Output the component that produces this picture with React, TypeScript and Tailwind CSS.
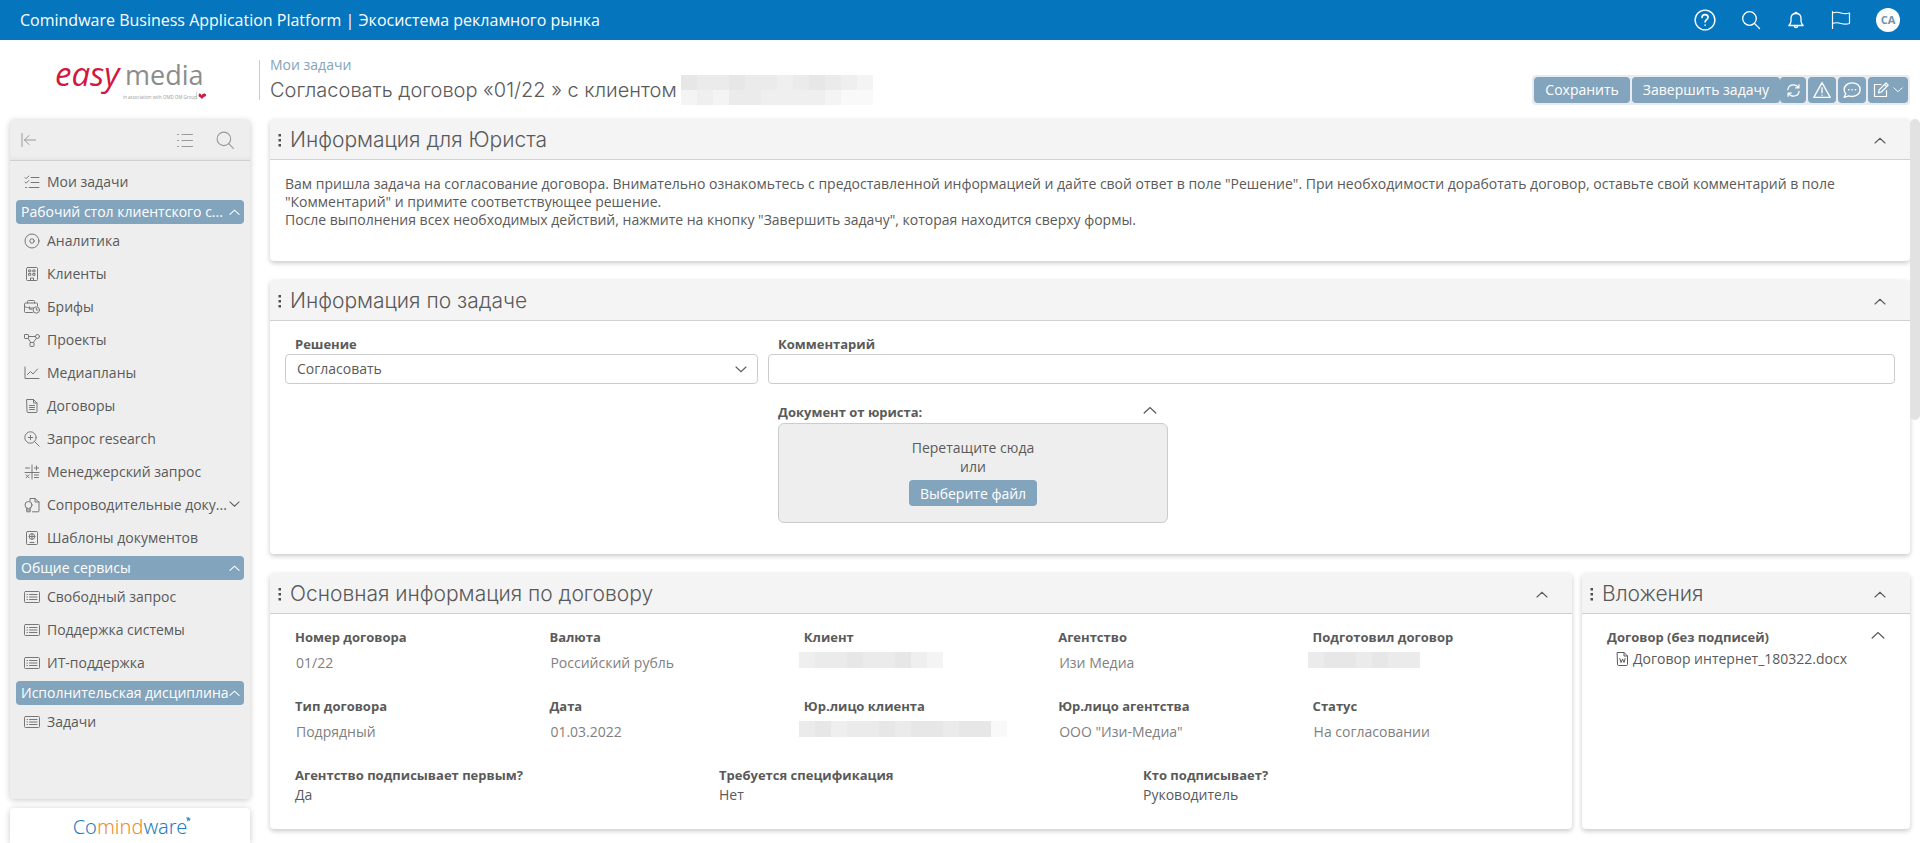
import type { ReactNode } from "react";

function Icon({ children, className = "size-4", box = 16 }: { children: ReactNode; className?: string; box?: number }) {
  return (
    <svg
      viewBox={`0 0 ${box} ${box}`}
      className={`shrink-0 ${className}`}
      fill="none"
      stroke="currentColor"
      strokeWidth={1}
      strokeLinecap="round"
      strokeLinejoin="round"
      aria-hidden="true"
    >
      {children}
    </svg>
  );
}

const icons = {
  checklist: (
    <>
      <path d="M1 3.500l1.200 1.200L4.800 2M1 8l1.200 1.200L4.800 6.500M7 3.500h8M7 8.500h8M5 13.500h10" />
      <path d="M1.500 13.500h1" />
    </>
  ),
  target: (
    <>
      <circle cx="8" cy="8" r="7" />
      <circle cx="8" cy="8" r="2.200" />
    </>
  ),
  building: (
    <>
      <rect x="2.500" y="1.500" width="11" height="13" rx="1" />
      <rect x="5" y="4" width="1.800" height="1.800" />
      <rect x="9.200" y="4" width="1.800" height="1.800" />
      <rect x="5" y="7.500" width="1.800" height="1.800" />
      <rect x="9.200" y="7.500" width="1.800" height="1.800" />
      <path d="M6.500 14.500v-2.500h3v2.500" />
    </>
  ),
  briefcase: (
    <>
      <path d="M8.500 13.500H1.500a1 1 0 0 1-1-1V5a1 1 0 0 1 1-1h11a1 1 0 0 1 1 1v2M3.500 4V2.500a1 1 0 0 1 1-1h5a1 1 0 0 1 1 1V4M.5 7.500c2 1 4 1.500 6 1.500h3M5.500 7.800v2.400h2.500" />
      <circle cx="12.300" cy="11" r="3.200" />
      <path d="M12.300 9.300V11h1.400" />
    </>
  ),
  nodes: (
    <>
      <rect x=".5" y="2.500" width="4" height="4" rx=".6" />
      <circle cx="13.500" cy="4.500" r="2" />
      <rect x="6" y="10.500" width="4" height="4" rx=".6" />
      <path d="M4.500 4.500h7M4 6.500l2.800 4M12.500 6.300l-3.300 4.200" />
    </>
  ),
  chart: <path d="M1 2v11.500h14M3.500 9.500l3-3 2.500 2.500 4.500-5" />,
  doc: (
    <>
      <path d="M3 1.500h6.500l3.500 3.500v8.500a1 1 0 0 1-1 1H4a1 1 0 0 1-1-1zM9.500 1.500V5H13M5.500 7.500h5M5.500 9.500h5M5.500 11.500h5" />
    </>
  ),
  zoom: (
    <>
      <circle cx="6.500" cy="6.500" r="5.700" />
      <path d="M10.700 10.700l4.500 4.500M6.500 4.300v4.400M4.300 6.500h4.400" />
    </>
  ),
  calc: <path d="M1 8.500h14M8 1v14M1.500 4h4M10.500 4h4M12.500 2v4M2 10.800l3 3M5 10.800l-3 3M10.500 11h4M10.500 13.500h4" />,
  docs: (
    <>
      <path d="M6 4V1.500h5l4 3.500v9a.8.8 0 0 1-.8.8H8.500M11 1.500V5h4" />
      <circle cx="4.500" cy="8" r="3.500" />
      <path d="M2.800 11.200v3.600h3.400v-3.600M2.800 13h3.400" />
    </>
  ),
  template: (
    <>
      <rect x="2.500" y="1.500" width="11" height="13" rx="1" />
      <circle cx="8" cy="6.500" r="2.800" />
      <path d="M5.200 6.500h5.600M8 3.700v5.600M6 12.500h4" />
    </>
  ),
  form: (
    <>
      <rect x=".5" y="2.500" width="15" height="11" rx="1" />
      <path d="M3 5.500h.5M5.500 5.500h7.500M3 8h.5M5.500 8h7.500M3 10.500h.5M5.500 10.500h7.500" />
    </>
  ),
};

type IconName = keyof typeof icons;

function Chevron({ up = false, className = "w-3" }: { up?: boolean; className?: string }) {
  return (
    <svg viewBox="0 0 12 7" className={`shrink-0 ${className}`} fill="none" stroke="currentColor" strokeWidth={1.1} strokeLinecap="round" aria-hidden="true">
      <path d={up ? "M1 6l5-4.700L11 6" : "M1 1l5 4.700L11 1"} />
    </svg>
  );
}

type Item = { icon: IconName; label: string; expandable?: boolean };

const workspace: Item[] = [
  { icon: "target", label: "Аналитика" },
  { icon: "building", label: "Клиенты" },
  { icon: "briefcase", label: "Брифы" },
  { icon: "nodes", label: "Проекты" },
  { icon: "chart", label: "Медиапланы" },
  { icon: "doc", label: "Договоры" },
  { icon: "zoom", label: "Запрос research" },
  { icon: "calc", label: "Менеджерский запрос" },
  { icon: "docs", label: "Сопроводительные доку...", expandable: true },
  { icon: "template", label: "Шаблоны документов" },
];

const services: Item[] = [
  { icon: "form", label: "Свободный запрос" },
  { icon: "form", label: "Поддержка системы" },
  { icon: "form", label: "ИТ-поддержка" },
];

function NavItem({ icon, label, expandable }: Item) {
  return (
    <li>
      <a href="#" className="flex h-[33px] items-center pl-2 pr-1">
        <Icon className="mr-[7px] size-4 text-[#777]">{icons[icon]}</Icon>
        <span className="grow whitespace-nowrap">{label}</span>
        {expandable && <Chevron className="w-[11px]" />}
      </a>
    </li>
  );
}

function NavSection({ title, items }: { title: string; items: Item[] }) {
  return (
    <li>
      <button type="button" className="mt-0.5 flex h-6 w-full items-center justify-between rounded bg-[#83a4bd] pl-[5px] pr-1 font-medium text-white">
        <span className="whitespace-nowrap">{title}</span>
        <Chevron up className="w-[11px]" />
      </button>
      <ul>
        {items.map((item) => (
          <NavItem key={item.label} {...item} />
        ))}
      </ul>
    </li>
  );
}

function Sidebar() {
  return (
    <aside className="flex w-[260px] shrink-0 flex-col">
      <div className="flex h-20 items-center justify-end">
        <EasyMediaLogo />
        <div className="ml-[50px] h-10 w-px bg-[#ccc]" />
      </div>
      <nav className="mx-[10px] grow rounded bg-[#eee] shadow-[0_1px_6px_rgba(0,0,0,0.22)]">
        <div className="flex h-[41px] items-center border-b border-[#d0d0d0] pl-[11px] pr-[7px] text-[#999] shadow-[0_-3px_5px_-3px_rgba(0,0,0,0.08)_inset]">
          <button type="button" aria-label="Свернуть меню" className="mr-auto">
            <Icon className="size-4">
              <path d="M1 1.500v13M14.500 8h-11M8 3.500L3.500 8 8 12.500" />
            </Icon>
          </button>
          <button type="button" aria-label="Список" className="mr-[23px]">
            <Icon className="size-4">
              <path d="M5 2.500h10.500M5 8.500h10.500M5 14.500h10.500M.5 2.500h1M.5 8.500h1M.5 14.500h1" />
            </Icon>
          </button>
          <button type="button" aria-label="Поиск по меню" className="mr-[9px]">
            <Icon className="size-[18px]">
              <circle cx="7" cy="7" r="6" />
              <path d="M11.300 11.300l4.200 4.200" />
            </Icon>
          </button>
        </div>
        <ul className="px-1.5 pt-1">
          <NavItem icon="checklist" label="Мои задачи" />
          <NavSection title="Рабочий стол клиентского с..." items={workspace} />
          <NavSection title="Общие сервисы" items={services} />
          <NavSection title="Исполнительская дисциплина" items={[{ icon: "form", label: "Задачи" }]} />
        </ul>
      </nav>
      <footer className="mx-[10px] mt-[9px] flex h-[35px] items-end justify-center rounded-t bg-white pb-0.5 shadow-[0_1px_6px_rgba(0,0,0,0.22)]">
        <span className='relative font-["Noto_Sans","Open_Sans",sans-serif] text-[20px] font-light leading-7 text-[#1f7fc4]'>
          Co<span className="text-[#f08a30]">mind</span>ware
          <svg viewBox="0 0 6 6" className="absolute -right-1 top-1 size-[5px]" fill="#3a8fc9" aria-hidden="true">
            <path d="M0 0l2.500 1L3.500 0l.5 1.500L6 2 4.500 3.200 5 5 3 4l-1.500 2L1.500 3z" />
          </svg>
        </span>
      </footer>
    </aside>
  );
}

function EasyMediaLogo() {
  return (
    <svg viewBox="0 0 156 64" className="w-[156px]" role="img" aria-label="easymedia">
      <text x="2" y="38" fontFamily="Open Sans" fontStyle="italic" fontSize="33" fill="#d3173f">
        easy
      </text>
      <text x="72" y="37" fontFamily="Open Sans" fontSize="27" fill="#8c8c8c">
        media
      </text>
      <text x="70" y="51" fontFamily="Open Sans" fontSize="4.500" fill="#999">
        in association with OMD OM Group
      </text>
      <path d="M143.500 44v7" stroke="#bbb" strokeWidth=".7" />
      <path d="M146 46c1-1 2 0 2.500 1.500 1-1.500 2.500-2.500 4-1.500 1.500 1.200 0 3-1.500 2.700l-2 2.300-2-2c-1 .5-2-1.500-1-3z" fill="#d3173f" />
    </svg>
  );
}

function TopBar() {
  return (
    <header className="flex h-10 shrink-0 items-center gap-[25px] bg-[#0575be] px-5 text-white">
      <h1 className="mr-auto text-base">Comindware Business Application Platform | Экосистема рекламного рынка</h1>
      <button type="button" aria-label="Справка">
        <Icon className="size-[22px]" box={20}>
          <circle cx="10" cy="10" r="9" strokeWidth={1.300} />
          <path d="M7.300 7.800c0-1.700 1.200-2.700 2.700-2.700s2.800 1 2.800 2.500c0 2-2.700 2-2.700 4.200M10.100 14.600v.2" strokeWidth={1.500} />
        </Icon>
      </button>
      <button type="button" aria-label="Поиск">
        <Icon className="size-5" box={20}>
          <circle cx="8.500" cy="8.500" r="6.800" strokeWidth={1.300} />
          <path d="M13.500 13.500l5 5" strokeWidth={1.300} />
        </Icon>
      </button>
      <button type="button" aria-label="Уведомления">
        <Icon className="size-5" box={20}>
          <path d="M2.800 15.500h14.400c-1.500-1.200-2.200-2.500-2.200-4.500V8.500c0-3-2-5-5-5s-5 2-5 5V11c0 2-.7 3.300-2.200 4.500zM8.800 3.500a1.200 1.200 0 0 1 2.400 0M8.300 16c.2 1 .9 1.600 1.700 1.600s1.500-.6 1.700-1.600" strokeWidth={1.300} />
        </Icon>
      </button>
      <button type="button" aria-label="Флаг">
        <Icon className="size-5" box={20}>
          <path d="M1.500 1.500v17M1.500 3c3-1.200 5.500-1 8.500 0s5.500 1 8.500 0v10.500c-3 1-5.500 1-8.500 0s-5.500-1.200-8.500 0" strokeWidth={1.200} />
        </Icon>
      </button>
      <button type="button" className="flex size-6 items-center justify-center rounded-full bg-white text-[11px] font-bold text-[#6d93b0]">
        CA
      </button>
    </header>
  );
}

function ToolButton({ label, className, children }: { label?: string; className: string; children: ReactNode }) {
  return (
    <button type="button" aria-label={label} className={`flex h-[26px] items-center justify-center bg-[#83a4bd] font-medium text-white ${className}`}>
      {children}
    </button>
  );
}

function Toolbar() {
  return (
    <div className="flex gap-0.5 rounded bg-[#e8ecf0] p-0.5">
      <ToolButton className="rounded px-[11px]">Сохранить</ToolButton>
      <div className="flex">
        <ToolButton className="rounded px-[11px]">Завершить задачу</ToolButton>
        <ToolButton label="Обновить" className="w-[26px] rounded">
          <Icon className="size-[15px]">
            <path d="M2 7c.5-3 3-5 6-5 2.300 0 4 1 5.300 3M13.800 1.800V5.300h-3.500M14 9c-.5 3-3 5-6 5-2.300 0-4-1-5.300-3M2.200 14.200v-3.500h3.500" strokeWidth={1.300} />
          </Icon>
        </ToolButton>
      </div>
      <ToolButton label="Предупреждение" className="w-7 rounded">
        <Icon className="size-[18px]">
          <path d="M8 1.500l7.300 13H.7zM8 6v4.500M8 12.500v.2" strokeWidth={1.200} />
        </Icon>
      </ToolButton>
      <ToolButton label="Обсуждение" className="w-7 rounded">
        <Icon className="size-[18px]">
          <path d="M1 14.500l1.500-3.200C1.500 10.300 1 9 1 7.800 1 4.300 4 1.700 8.200 1.700s7 2.600 7 6c0 3.500-3 6.100-7 6.100-1 0-2-.1-3-.5zM5 7.800h.3M8 7.800h.3M11 7.800h.3" strokeWidth={1.200} />
        </Icon>
      </ToolButton>
      <ToolButton label="Редактировать" className="w-10 gap-1 rounded">
        <Icon className="size-4">
          <path d="M8 2.500H1.500v12h12V8.500M5.500 10.800l.7-3L13 1l2.200 2.200-6.800 6.800zM11.500 2.500l2.200 2.200" strokeWidth={1.200} />
        </Icon>
        <Chevron className="w-[10px]" />
      </ToolButton>
    </div>
  );
}

function Panel({ title, className = "", children }: { title: string; className?: string; children: ReactNode }) {
  return (
    <section className={`rounded bg-white shadow-[0_2px_5px_rgba(0,0,0,0.22)] ${className}`}>
      <header className="flex h-[41px] items-center rounded-t border-b border-[#d0d0d0] bg-[#f4f4f4] pl-2 pr-6 pt-px">
        <svg viewBox="0 0 4 14" className="mr-2 h-3.5 w-1" fill="#505050" aria-hidden="true">
          <rect x=".5" y="1" width="2.500" height="2.500" />
          <rect x=".5" y="6" width="2.500" height="2.500" />
          <rect x=".5" y="11" width="2.500" height="2.500" />
        </svg>
        <h2 className='grow font-["Inter","Open_Sans",sans-serif] text-[21px] font-light leading-6'>{title}</h2>
        <button type="button" aria-label="Свернуть" className="pt-0.5">
          <Chevron up className="w-3" />
        </button>
      </header>
      {children}
    </section>
  );
}

const shade: Record<string, string> = {
  a: "bg-[#e7e7e7]",
  b: "bg-[#ebebeb]",
  c: "bg-[#efefef]",
  d: "bg-[#f4f4f4]",
  e: "bg-[#f9f9f9]",
};

function Redacted({ rows, className = "" }: { rows: string[]; className?: string }) {
  return (
    <span className={`flex flex-col ${className}`} aria-label="Скрыто">
      {rows.map((row, r) => (
        <span key={r} className="flex">
          {row.split("").map((tone, i) => (
            <span key={i} className={`w-4 ${rows.length > 1 ? "h-[15px]" : "h-4"} ${shade[tone]}`} />
          ))}
        </span>
      ))}
    </span>
  );
}

const fields: { label: string; value: ReactNode }[] = [
  { label: "Номер договора", value: "01/22" },
  { label: "Валюта", value: "Российский рубль" },
  { label: "Клиент", value: <Redacted className="-ml-1.5" rows={["cbbabbacd"]} /> },
  { label: "Агентство", value: "Изи Медиа" },
  { label: "Подготовил договор", value: <Redacted className="-ml-1.5" rows={["baababb"]} /> },
  { label: "Тип договора", value: "Подрядный" },
  { label: "Дата", value: "01.03.2022" },
  { label: "Юр.лицо клиента", value: <Redacted className="-ml-1.5" rows={["bacbbabaabaae"]} /> },
  { label: "Юр.лицо агентства", value: 'ООО "Изи-Медиа"' },
  { label: "Статус", value: "На согласовании" },
];

const signing = [
  { label: "Агентство подписывает первым?", value: "Да" },
  { label: "Требуется спецификация", value: "Нет" },
  { label: "Кто подписывает?", value: "Руководитель" },
];

function TaskPanel() {
  return (
    <Panel title="Информация по задаче">
      <div className="grid grid-cols-[3fr_7fr] px-[15px] pb-[31px] pt-[14px]">
        <div className="pr-[10px]">
          <label htmlFor="decision" className="block pl-[10px] text-[13px] font-bold leading-[18px]">
            Решение
          </label>
          <div className="relative mt-px">
            <select id="decision" className="h-[30px] w-full appearance-none rounded border border-[#ccc] bg-white px-[11px]">
              <option>Согласовать</option>
              <option>Отклонить</option>
            </select>
            <Chevron className="pointer-events-none absolute right-[11px] top-3 w-3" />
          </div>
        </div>
        <div>
          <label htmlFor="comment" className="block pl-[10px] text-[13px] font-bold leading-[18px]">
            Комментарий
          </label>
          <input id="comment" type="text" className="mt-px block h-[30px] w-full rounded border border-[#ccc] bg-white px-[11px]" />
          <div className="mt-[19px] w-[400px] pl-[10px]">
            <div className="flex items-center justify-between pr-[11px]">
              <span className="text-[13px] font-bold leading-[18px]">Документ от юриста:</span>
              <button type="button" aria-label="Свернуть документ" className="pb-1">
                <Chevron up className="w-3.5" />
              </button>
            </div>
            <div className="mt-0.5 flex h-[100px] flex-col items-center justify-center rounded-md border border-[#ccc] bg-[#eee] pb-0.5 leading-[19px]">
              <p>Перетащите сюда</p>
              <p>или</p>
              <button type="button" className="mt-1 h-[26px] rounded bg-[#83a4bd] px-[11px] font-medium text-white">
                Выберите файл
              </button>
            </div>
          </div>
        </div>
      </div>
    </Panel>
  );
}

function ContractPanel() {
  return (
    <Panel title="Основная информация по договору">
      <div className="px-[15px] pb-[25px] pt-[14px]">
        <dl className="grid grid-cols-5">
          {fields.map((f) => (
            <div key={f.label} className="h-[69px] pl-[10px]">
              <dt className="text-[13px] font-bold">{f.label}</dt>
              <dd className={`pl-px text-[#808080] ${typeof f.value === "string" ? "mt-2" : "mt-1.5"}`}>{f.value}</dd>
            </div>
          ))}
        </dl>
        <dl className="grid grid-cols-3">
          {signing.map((f) => (
            <div key={f.label} className="pl-[10px]">
              <dt className="text-[13px] font-bold">{f.label}</dt>
              <dd className="mt-0.5">{f.value}</dd>
            </div>
          ))}
        </dl>
      </div>
    </Panel>
  );
}

function AttachmentsPanel() {
  return (
    <Panel title="Вложения" className="w-[328px] shrink-0">
      <div className="px-[25px] pt-[14px]">
        <div className="flex items-center justify-between">
          <span className="text-[13px] font-bold">Договор (без подписей)</span>
          <button type="button" aria-label="Свернуть вложения" className="pb-1">
            <Chevron up className="w-3.5" />
          </button>
        </div>
        <a href="#" className="mt-1 flex items-center gap-0.5 pl-2">
          <Icon className="size-4">
            <path d="M2.500 1.500h6.500l3.500 3.500v8.500a1 1 0 0 1-1 1h-8a1 1 0 0 1-1-1zM9 1.500V5h3.500M4.800 7.500l1.200 4 1.500-3.500L9 11.500l1.200-4" />
          </Icon>
          Договор интернет_180322.docx
        </a>
      </div>
    </Panel>
  );
}

export default function App() {
  return (
    <div className='flex h-screen flex-col overflow-hidden bg-white font-["Open_Sans","Noto_Sans",sans-serif] text-[14px] leading-[18px] text-[#5a5a5a]'>
      <TopBar />
      <div className="flex min-h-0 grow">
        <Sidebar />
        <main className="flex min-w-0 grow flex-col pl-[10px]">
          <div className="flex h-[79px] shrink-0 items-end justify-between pb-[14px] pr-[10px]">
            <div>
              <a href="#" className="text-[#83a4bd]">
                Мои задачи
              </a>
              <div className="mt-px flex h-[30px] items-center gap-1">
                <h2 className='font-["Inter","Open_Sans",sans-serif] text-[20px] font-light leading-6'>Согласовать договор «01/22 » с клиентом</h2>
                <Redacted rows={["abbabbcbabcd", "dcdbbccccdee"]} />
              </div>
            </div>
            <Toolbar />
          </div>
          <div className="flex min-h-0 grow">
            <div className="flex min-w-0 grow flex-col gap-[19px]">
              <Panel title="Информация для Юриста">
                <div className="px-[15px] pb-8 pt-[15px]">
                  <p>
                    Вам пришла задача на согласование договора. Внимательно ознакомьтесь с предоставленной информацией и дайте свой ответ в поле "Решение". При необходимости доработать договор, оставьте свой комментарий в поле "Комментарий" и примите соответствующее решение.
                  </p>
                  <p>После выполнения всех необходимых действий, нажмите на кнопку "Завершить задачу", которая находится сверху формы.</p>
                </div>
              </Panel>
              <TaskPanel />
              <div className="flex gap-[10px]">
                <div className="min-w-0 grow">
                  <ContractPanel />
                </div>
                <AttachmentsPanel />
              </div>
            </div>
            <div className="w-[10px] shrink-0">
              <div className="h-[301px] rounded-full bg-[#e2e2e2]" />
            </div>
          </div>
        </main>
      </div>
    </div>
  );
}
